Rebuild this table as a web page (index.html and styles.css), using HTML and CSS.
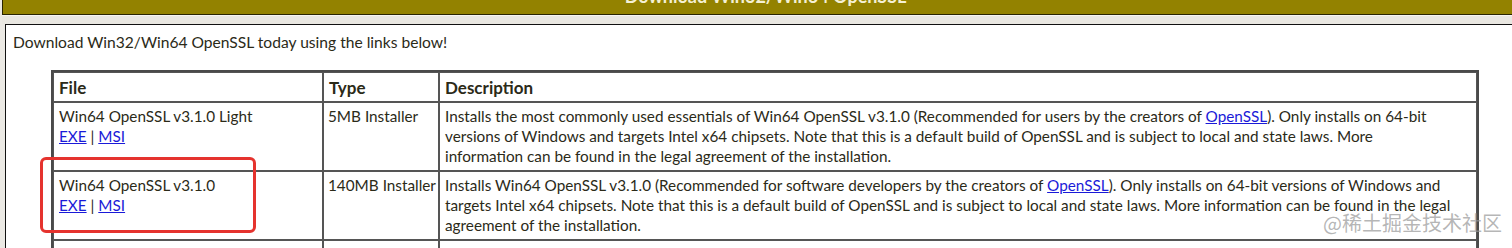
FILE: index.html
```html
<!DOCTYPE html>
<html>
<head>
<meta charset="utf-8">
<link rel="stylesheet" href="styles.css">
</head>
<body>
<div class="page">
  <div class="banner">Download Win32/Win64 OpenSSL</div>
  <div class="gap"></div>
  <div class="content">
    <p class="intro">Download Win32/Win64 OpenSSL today using the links below!</p>
    <table class="dl">
      <colgroup><col class="c-file"><col class="c-type"><col class="c-desc"></colgroup>
      <tr class="head"><th>File</th><th>Type</th><th>Description</th></tr>
      <tr>
        <td>Win64 OpenSSL v3.1.0 Light<br><a href="#">EXE</a> | <a href="#">MSI</a></td>
        <td class="type">5MB Installer</td>
        <td>Installs the most commonly used essentials of Win64 OpenSSL v3.1.0 (Recommended for users by the creators of <a href="#">OpenSSL</a>). Only installs on 64-bit versions of Windows and targets Intel x64 chipsets. Note that this is a default build of OpenSSL and is subject to local and state laws. More<br>information can be found in the legal agreement of the installation.</td>
      </tr>
      <tr>
        <td>Win64 OpenSSL v3.1.0<br><a href="#">EXE</a> | <a href="#">MSI</a></td>
        <td class="type">140MB Installer</td>
        <td>Installs Win64 OpenSSL v3.1.0 (Recommended for software developers by the creators of <a href="#">OpenSSL</a>). Only installs on 64-bit versions of Windows and targets Intel x64 chipsets. Note that this is a default build of OpenSSL and is subject to local and state laws. More information can be found in the legal agreement of the installation.</td>
      </tr>
      <tr>
        <td>Win32 OpenSSL v3.1.0 Light<br><a href="#">EXE</a> | <a href="#">MSI</a></td>
        <td class="type">4MB Installer</td>
        <td>Installs the most commonly used essentials of Win32 OpenSSL v3.1.0 (Only install this if you need 32-bit OpenSSL for Windows. Note that this is a default build of OpenSSL and is subject to local and state laws. More information can be found in the legal agreement of the installation.</td>
      </tr>
    </table>
  </div>
  <div class="mark"></div>
  <div class="watermark">@稀土掘金技术社区</div>
</div>
</body>
</html>
```
FILE: styles.css
```css
html, body {
  margin: 0;
  padding: 0;
  background: #ebe9e4;
  overflow: hidden;
  height: 248px;
}
.page {
  position: relative;
  padding-left: 2px;
  font-family: Lato, "Open Sans", sans-serif;
  color: #2b2a18;
}
.banner {
  margin-top: -16px;
  height: 29px;
  border: 1px solid #2a2500;
  border-right: none;
  background: #938200;
  color: #f4f0d4;
  font-weight: bold;
  font-size: 18px;
  line-height: 22px;
  text-align: center;
  padding-left: 16px;
}
.gap {
  height: 8px;
  background: #e9e7e1;
  border-top: 1px solid #f6f5f2;
}
.content {
  margin-left: 3px;
  border-top: 1px solid #111;
  border-left: 1px solid #111;
  background: #fff;
  padding: 7px 0 0 7px;
  height: 400px;
}
.intro {
  margin: 0;
  font-size: 15.6px;
  line-height: 20px;
}
.dl {
  margin: 18px 0 0 38px;
  width: 1428px;
  border: 2px solid #4a4a4a;
  border-spacing: 0;
  border-collapse: separate;
  font-size: 15.3px;
  line-height: 20px;
  table-layout: fixed;
}
.c-file { width: 270px; }
.c-type { width: 116px; }
.dl th, .dl td {
  border: 1px solid #555;
  padding: 3px 4px 4px 5px;
  text-align: left;
  vertical-align: top;
}
.dl td.type {
  white-space: nowrap;
  padding-left: 4px;
  padding-right: 2px;
}
.dl th {
  font-weight: bold;
  font-size: 17px;
  padding-top: 5px;
  padding-bottom: 3px;
}
.dl a {
  color: #1a1ad8;
  text-decoration: underline;
}
.mark {
  position: absolute;
  left: 40px;
  top: 173px;
  width: 210px;
  height: 70px;
  border: 3px solid #e5332e;
  border-radius: 6px;
}
.watermark {
  position: absolute;
  right: 10px;
  top: 226px;
  font-family: "Noto Sans CJK SC", sans-serif;
  font-size: 20px;
  line-height: 26px;
  color: rgba(150, 150, 150, 0.7);
}
```
